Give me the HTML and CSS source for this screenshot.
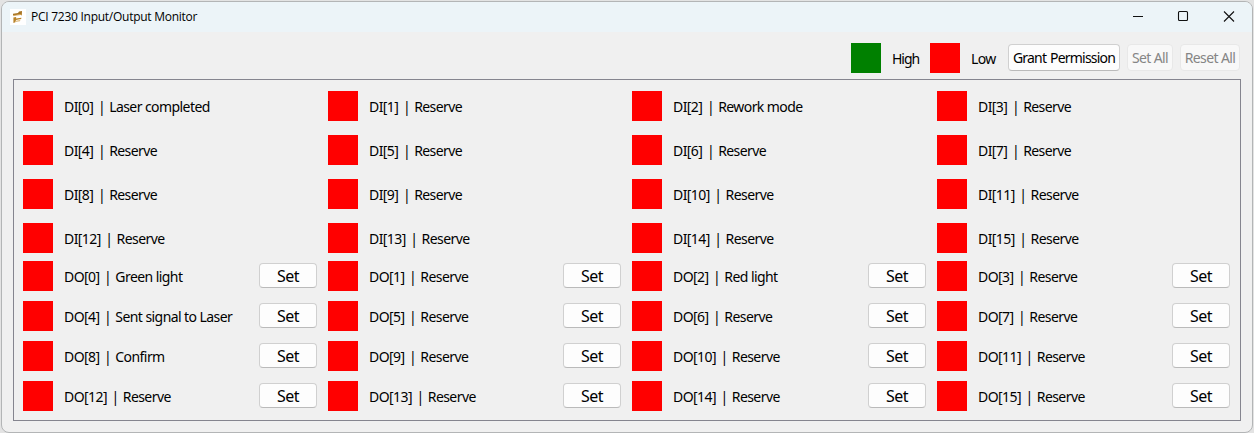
FILE: index.html
```html
<!DOCTYPE html>
<html lang="en">
<head>
<meta charset="utf-8">
<title>PCI 7230 Input/Output Monitor</title>
<link rel="stylesheet" href="styles.css">
</head>
<body>
<div class="window">
  <header class="titlebar">
    <svg class="app-icon" width="16" height="16" viewBox="0 0 16 16"><rect width="16" height="16" fill="#fff"/><path d="M3 4.8 8 4 9 2.6 12 2 11.8 6.6 10 5.6 3 6.4z" fill="#a87524"/><path d="M3.4 6.6 11.5 5.4" stroke="#d6a04a" stroke-width=".8"/><path d="M3.4 8.6 6.2 8 6 9.6 11.4 8.7 11.2 10 6 11 5.4 13.2 3.4 14z" fill="#b98328"/><path d="M6 11.8 10.4 10.8 10 12.2 6 13z" fill="#dfbd83"/></svg>
    <span class="title">PCI 7230 Input/Output Monitor</span>
    <span class="controls">
      <svg width="46" height="30" viewBox="0 0 46 30"><path d="M18 14.5h10" stroke="#111"/></svg>
      <svg width="46" height="30" viewBox="0 0 46 30"><rect x="17.5" y="9.5" width="9" height="9" rx="1" fill="none" stroke="#111" stroke-width="1.1"/></svg>
      <svg width="46" height="30" viewBox="0 0 46 30"><path d="M17 9.5l10 10M27 9.5l-10 10" stroke="#111" stroke-width="1.1"/></svg>
    </span>
  </header>
  <div class="toolbar">
    <i class="led high"></i><span class="legend legend-high">High</span>
    <i class="led"></i><span class="legend legend-low">Low</span>
    <button class="btn grant">Grant Permission</button>
    <button class="btn set-all" disabled>Set All</button>
    <button class="btn reset-all" disabled>Reset All</button>
  </div>
  <main class="panel">
    <section class="grid inputs">
      <div class="cell"><i class="led"></i><span class="label">DI[0] <b>|</b> Laser completed</span></div>
      <div class="cell"><i class="led"></i><span class="label">DI[1] <b>|</b> Reserve</span></div>
      <div class="cell"><i class="led"></i><span class="label">DI[2] <b>|</b> Rework mode</span></div>
      <div class="cell"><i class="led"></i><span class="label">DI[3] <b>|</b> Reserve</span></div>
      <div class="cell"><i class="led"></i><span class="label">DI[4] <b>|</b> Reserve</span></div>
      <div class="cell"><i class="led"></i><span class="label">DI[5] <b>|</b> Reserve</span></div>
      <div class="cell"><i class="led"></i><span class="label">DI[6] <b>|</b> Reserve</span></div>
      <div class="cell"><i class="led"></i><span class="label">DI[7] <b>|</b> Reserve</span></div>
      <div class="cell"><i class="led"></i><span class="label">DI[8] <b>|</b> Reserve</span></div>
      <div class="cell"><i class="led"></i><span class="label">DI[9] <b>|</b> Reserve</span></div>
      <div class="cell"><i class="led"></i><span class="label">DI[10] <b>|</b> Reserve</span></div>
      <div class="cell"><i class="led"></i><span class="label">DI[11] <b>|</b> Reserve</span></div>
      <div class="cell"><i class="led"></i><span class="label">DI[12] <b>|</b> Reserve</span></div>
      <div class="cell"><i class="led"></i><span class="label">DI[13] <b>|</b> Reserve</span></div>
      <div class="cell"><i class="led"></i><span class="label">DI[14] <b>|</b> Reserve</span></div>
      <div class="cell"><i class="led"></i><span class="label">DI[15] <b>|</b> Reserve</span></div>
    </section>
    <section class="grid outputs">
      <div class="cell"><i class="led"></i><span class="label">DO[0] <b>|</b> Green light</span><button class="btn set">Set</button></div>
      <div class="cell"><i class="led"></i><span class="label">DO[1] <b>|</b> Reserve</span><button class="btn set">Set</button></div>
      <div class="cell"><i class="led"></i><span class="label">DO[2] <b>|</b> Red light</span><button class="btn set">Set</button></div>
      <div class="cell"><i class="led"></i><span class="label">DO[3] <b>|</b> Reserve</span><button class="btn set">Set</button></div>
      <div class="cell"><i class="led"></i><span class="label">DO[4] <b>|</b> Sent signal to Laser</span><button class="btn set">Set</button></div>
      <div class="cell"><i class="led"></i><span class="label">DO[5] <b>|</b> Reserve</span><button class="btn set">Set</button></div>
      <div class="cell"><i class="led"></i><span class="label">DO[6] <b>|</b> Reserve</span><button class="btn set">Set</button></div>
      <div class="cell"><i class="led"></i><span class="label">DO[7] <b>|</b> Reserve</span><button class="btn set">Set</button></div>
      <div class="cell"><i class="led"></i><span class="label">DO[8] <b>|</b> Confirm</span><button class="btn set">Set</button></div>
      <div class="cell"><i class="led"></i><span class="label">DO[9] <b>|</b> Reserve</span><button class="btn set">Set</button></div>
      <div class="cell"><i class="led"></i><span class="label">DO[10] <b>|</b> Reserve</span><button class="btn set">Set</button></div>
      <div class="cell"><i class="led"></i><span class="label">DO[11] <b>|</b> Reserve</span><button class="btn set">Set</button></div>
      <div class="cell"><i class="led"></i><span class="label">DO[12] <b>|</b> Reserve</span><button class="btn set">Set</button></div>
      <div class="cell"><i class="led"></i><span class="label">DO[13] <b>|</b> Reserve</span><button class="btn set">Set</button></div>
      <div class="cell"><i class="led"></i><span class="label">DO[14] <b>|</b> Reserve</span><button class="btn set">Set</button></div>
      <div class="cell"><i class="led"></i><span class="label">DO[15] <b>|</b> Reserve</span><button class="btn set">Set</button></div>
    </section>
  </main>
</div>
</body>
</html>
```
FILE: styles.css
```css
* { box-sizing: border-box; }
body {
  margin: 0;
  padding: 1px;
  height: 433px;
  overflow: hidden;
  background: #e3e3e3;
  font: 14px/20px "Noto Sans", "Open Sans", sans-serif;
  letter-spacing: -0.6px;
  color: #000;
}
.window {
  width: 1252px;
  height: 432px;
  border: 1px solid #b3b5b6;
  border-radius: 8px;
  background: #f0f0f0;
  overflow: hidden;
}
.titlebar {
  display: flex;
  align-items: center;
  height: 30px;
  padding-left: 8px;
  background: #ecf4f8;
}
.app-icon { display: block; }
.title {
  margin-left: 5px;
  font: 12px/16px "Open Sans", "Noto Sans", sans-serif;
  letter-spacing: -0.26px;
}
.controls { display: flex; margin: 0 -1px 0 auto; }
.controls svg { display: block; }
.toolbar {
  display: flex;
  justify-content: flex-end;
  height: 47px;
  padding: 11px 12px 0 0;
}
.led { flex: none; width: 30px; height: 30px; background: #f00; }
.led.high { background: #008000; }
.legend { padding: 6px 0 0 11px; white-space: nowrap; }
.legend-high { width: 49px; letter-spacing: -1px; }
.legend-low { width: 48px; }
.btn {
  flex: none;
  padding: 0;
  border: 1px solid #d0d0d0;
  border-bottom-color: #bababa;
  border-radius: 4px;
  background: #fdfdfd;
  font: inherit;
  letter-spacing: inherit;
  color: #000;
  white-space: nowrap;
  text-align: center;
}
.btn:disabled { border-color: #e8e8e8; background: #f8f8f8; color: #858585; }
.grant, .set-all, .reset-all { height: 27px; margin-top: 1px; }
.grant { width: 112px; letter-spacing: -0.8px; word-spacing: 1px; }
.set-all { width: 46px; margin-left: 7px; }
.reset-all { width: 60px; margin-left: 7px; }
.panel {
  width: 1228px;
  height: 342px;
  margin-left: 11px;
  padding: 11px 0 0 9px;
  border: 1px solid #85858f;
}
.grid {
  display: grid;
  grid-template-columns: 294px 293px 294px 293px;
  column-gap: 11px;
}
.inputs { row-gap: 14px; }
.outputs { row-gap: 10px; margin-top: 8px; }
.cell { display: flex; height: 30px; }
.label { padding: 6px 0 0 11px; white-space: nowrap; letter-spacing: -0.57px; }
.label b { padding: 0 1px 0 1.5px; font-weight: 400; }
.set { width: 58px; height: 25px; margin: 2px 0 0 auto; font-size: 16px; line-height: 22px; }
```
